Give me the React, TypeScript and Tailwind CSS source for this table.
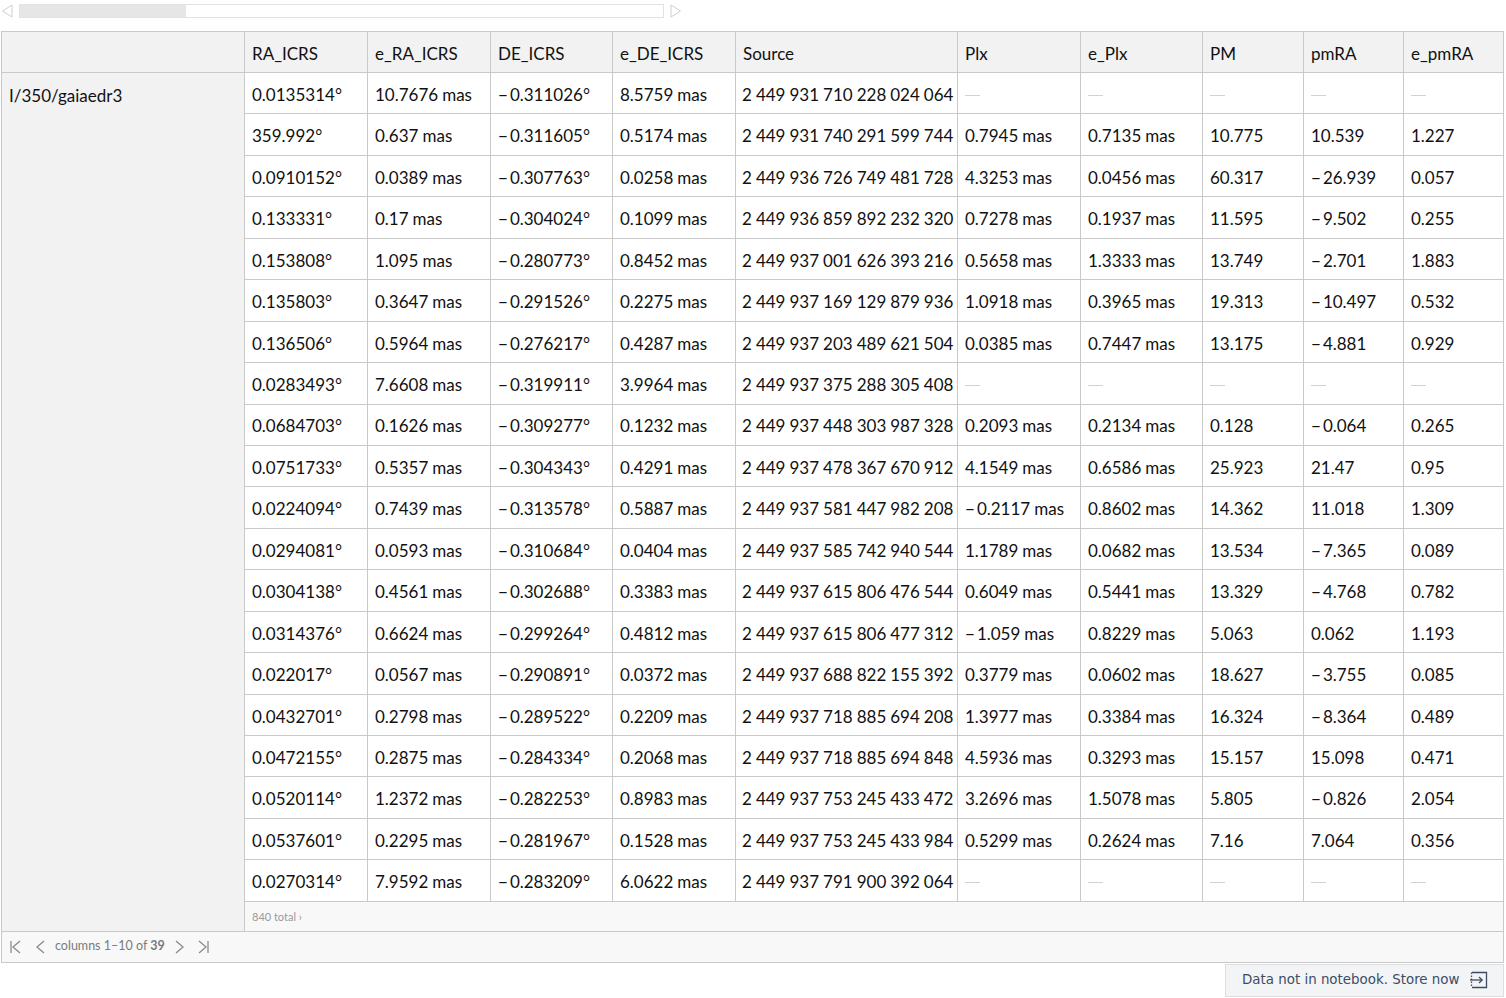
import React from "react";

const W = [243, 123, 123, 122, 123, 222, 123, 122, 101, 100, 99];
const HEAD = ["RA_ICRS", "e_RA_ICRS", "DE_ICRS", "e_DE_ICRS", "Source", "Plx", "e_Plx", "PM", "pmRA", "e_pmRA"];

const D = "—";
const ROWS: string[][] = [
  ["0.0135314°", "10.7676 mas", "-0.311026°", "8.5759 mas", "2449931710228024064", D, D, D, D, D],
  ["359.992°", "0.637 mas", "-0.311605°", "0.5174 mas", "2449931740291599744", "0.7945 mas", "0.7135 mas", "10.775", "10.539", "1.227"],
  ["0.0910152°", "0.0389 mas", "-0.307763°", "0.0258 mas", "2449936726749481728", "4.3253 mas", "0.0456 mas", "60.317", "-26.939", "0.057"],
  ["0.133331°", "0.17 mas", "-0.304024°", "0.1099 mas", "2449936859892232320", "0.7278 mas", "0.1937 mas", "11.595", "-9.502", "0.255"],
  ["0.153808°", "1.095 mas", "-0.280773°", "0.8452 mas", "2449937001626393216", "0.5658 mas", "1.3333 mas", "13.749", "-2.701", "1.883"],
  ["0.135803°", "0.3647 mas", "-0.291526°", "0.2275 mas", "2449937169129879936", "1.0918 mas", "0.3965 mas", "19.313", "-10.497", "0.532"],
  ["0.136506°", "0.5964 mas", "-0.276217°", "0.4287 mas", "2449937203489621504", "0.0385 mas", "0.7447 mas", "13.175", "-4.881", "0.929"],
  ["0.0283493°", "7.6608 mas", "-0.319911°", "3.9964 mas", "2449937375288305408", D, D, D, D, D],
  ["0.0684703°", "0.1626 mas", "-0.309277°", "0.1232 mas", "2449937448303987328", "0.2093 mas", "0.2134 mas", "0.128", "-0.064", "0.265"],
  ["0.0751733°", "0.5357 mas", "-0.304343°", "0.4291 mas", "2449937478367670912", "4.1549 mas", "0.6586 mas", "25.923", "21.47", "0.95"],
  ["0.0224094°", "0.7439 mas", "-0.313578°", "0.5887 mas", "2449937581447982208", "-0.2117 mas", "0.8602 mas", "14.362", "11.018", "1.309"],
  ["0.0294081°", "0.0593 mas", "-0.310684°", "0.0404 mas", "2449937585742940544", "1.1789 mas", "0.0682 mas", "13.534", "-7.365", "0.089"],
  ["0.0304138°", "0.4561 mas", "-0.302688°", "0.3383 mas", "2449937615806476544", "0.6049 mas", "0.5441 mas", "13.329", "-4.768", "0.782"],
  ["0.0314376°", "0.6624 mas", "-0.299264°", "0.4812 mas", "2449937615806477312", "-1.059 mas", "0.8229 mas", "5.063", "0.062", "1.193"],
  ["0.022017°", "0.0567 mas", "-0.290891°", "0.0372 mas", "2449937688822155392", "0.3779 mas", "0.0602 mas", "18.627", "-3.755", "0.085"],
  ["0.0432701°", "0.2798 mas", "-0.289522°", "0.2209 mas", "2449937718885694208", "1.3977 mas", "0.3384 mas", "16.324", "-8.364", "0.489"],
  ["0.0472155°", "0.2875 mas", "-0.284334°", "0.2068 mas", "2449937718885694848", "4.5936 mas", "0.3293 mas", "15.157", "15.098", "0.471"],
  ["0.0520114°", "1.2372 mas", "-0.282253°", "0.8983 mas", "2449937753245433472", "3.2696 mas", "1.5078 mas", "5.805", "-0.826", "2.054"],
  ["0.0537601°", "0.2295 mas", "-0.281967°", "0.1528 mas", "2449937753245433984", "0.5299 mas", "0.2624 mas", "7.16", "7.064", "0.356"],
  ["0.0270314°", "7.9592 mas", "-0.283209°", "6.0622 mas", "2449937791900392064", D, D, D, D, D],
];

function Val({ v, isSource }: { v: string; isSource: boolean }) {
  if (v === D) {
    return <span className="inline-block w-[15px] h-px bg-[#d2d2d2] mt-[1px]" />;
  }
  if (isSource) {
    const first = v.slice(0, v.length % 3 || 3);
    const rest = v.slice(first.length).match(/.{3}/g) || [];
    return (
      <span className="inline-flex gap-[4px]">
        <span>{first}</span>
        {rest.map((g, i) => (
          <span key={i}>{g}</span>
        ))}
      </span>
    );
  }
  let neg = false;
  let s = v;
  if (s.startsWith("-")) {
    neg = true;
    s = s.slice(1);
  }
  let unit = "";
  if (s.endsWith(" mas")) {
    unit = "mas";
    s = s.slice(0, -4);
  }
  return (
    <span className="whitespace-nowrap">
      {neg && <span className="mr-[2px]">−</span>}
      {s}
      {unit && <span className="ml-[4px]">{unit}</span>}
    </span>
  );
}

function FirstIcon() {
  return (
    <svg width="14" height="16" viewBox="0 0 14 16" fill="none" stroke="#8a8a8a" strokeWidth="1.3">
      <path d="M2 2v12" />
      <path d="M11 2L4 8l7 6" />
    </svg>
  );
}
function PrevIcon() {
  return (
    <svg width="12" height="16" viewBox="0 0 12 16" fill="none" stroke="#8a8a8a" strokeWidth="1.3">
      <path d="M10 2L3 8l7 6" />
    </svg>
  );
}
function NextIcon() {
  return (
    <svg width="12" height="16" viewBox="0 0 12 16" fill="none" stroke="#8a8a8a" strokeWidth="1.3">
      <path d="M2 2l7 6-7 6" />
    </svg>
  );
}
function LastIcon() {
  return (
    <svg width="14" height="16" viewBox="0 0 14 16" fill="none" stroke="#8a8a8a" strokeWidth="1.3">
      <path d="M3 2l7 6-7 6" />
      <path d="M12 2v12" />
    </svg>
  );
}

function StoreIcon() {
  return (
    <svg width="20" height="20" viewBox="0 0 20 20" fill="none" stroke="#3d4c63" strokeWidth="1.3">
      <path d="M3 2.5h14.5v15H3" />
      <path d="M2.5 2.5v15" strokeDasharray="1.5 1.5" />
      <path d="M1 10h12" />
      <path d="M10 7l3.2 3-3.2 3" />
    </svg>
  );
}

export default function App() {
  return (
    <div className="w-[1506px] h-[998px] bg-white relative overflow-hidden" style={{ fontFamily: "Lato, 'Open Sans', sans-serif" }}>
      {/* scrollbar */}
      <div className="h-[31px] flex items-start pt-[4px]">
        <svg width="12" height="14" viewBox="0 0 12 14" className="ml-[1px]" fill="none" stroke="#cfcfcf" strokeWidth="1">
          <path d="M11 1L1.5 7L11 13Z" />
        </svg>
        <div className="ml-[6px] w-[645px] h-[14px] border border-[#e2e2e2] bg-white flex">
          <div className="w-[166px] h-full bg-[#e6e6e6]" />
        </div>
        <svg width="12" height="14" viewBox="0 0 12 14" className="ml-[6px]" fill="none" stroke="#cfcfcf" strokeWidth="1">
          <path d="M1 1L10.5 7L1 13Z" />
        </svg>
      </div>

      {/* table */}
      <div className="ml-px w-[1503px] border border-[#c9c9c9] text-[17px] text-[#111]">
        {/* header */}
        <div className="flex h-[41px] bg-[#f2f2f2] border-b border-[#c9c9c9]">
          {W.map((w, i) => (
            <div
              key={i}
              style={{ width: w }}
              className={`shrink-0 h-full flex items-center pl-[7px] pt-[3px] ${i < W.length - 1 ? "border-r border-[#c9c9c9]" : ""}`}
            >
              {i > 0 ? HEAD[i - 1] : ""}
            </div>
          ))}
        </div>
        {/* body */}
        <div className="flex">
          <div className="w-[243px] shrink-0 bg-[#f2f2f2] border-r border-[#c9c9c9] pl-[7px] pt-[10px]">
            I/350/gaiaedr3
          </div>
          <div className="flex flex-col">
            {ROWS.map((r, ri) => (
              <div key={ri} className="flex h-[41.45px] border-b border-[#c9c9c9]">
                {r.map((v, ci) => (
                  <div
                    key={ci}
                    style={{ width: W[ci + 1] }}
                    className={`shrink-0 h-full flex items-center pt-[3px] overflow-hidden whitespace-nowrap ${ci === 4 ? "pl-[6px]" : "pl-[7px]"} ${ci < 9 ? "border-r border-[#c9c9c9]" : ""}`}
                  >
                    <Val v={v} isSource={ci === 4} />
                  </div>
                ))}
              </div>
            ))}
            <div className="h-[29px] bg-[#f8f8f8] flex items-center pl-[7px] pt-[2px] text-[11px] text-[#9a9a9a]">
              840 total ›
            </div>
          </div>
        </div>
        {/* pagination */}
        <div className="h-[31px] bg-[#f8f8f8] border-t border-[#c9c9c9] flex items-center pl-[7px] text-[12.5px] text-[#7b7b7b]">
          <FirstIcon />
          <span className="ml-[11px] flex"><PrevIcon /></span>
          <span className="ml-[9px]">
            columns 1–10 of <span className="font-bold">39</span>
          </span>
          <span className="ml-[9px] flex"><NextIcon /></span>
          <span className="ml-[10px] flex"><LastIcon /></span>
        </div>
      </div>

      {/* store button */}
      <div className="flex justify-end pr-[2px] pt-[1px]">
        <div
          className="h-[33px] w-[279px] bg-[#f3f4f6] border border-[#dcdee2] flex items-center pl-[16px] gap-[10px] text-[13.4px] text-[#3d4c63]"
          style={{ fontFamily: "'DejaVu Sans', sans-serif" }}
        >
          <span>Data not in notebook. Store now</span>
          <StoreIcon />
        </div>
      </div>
    </div>
  );
}
